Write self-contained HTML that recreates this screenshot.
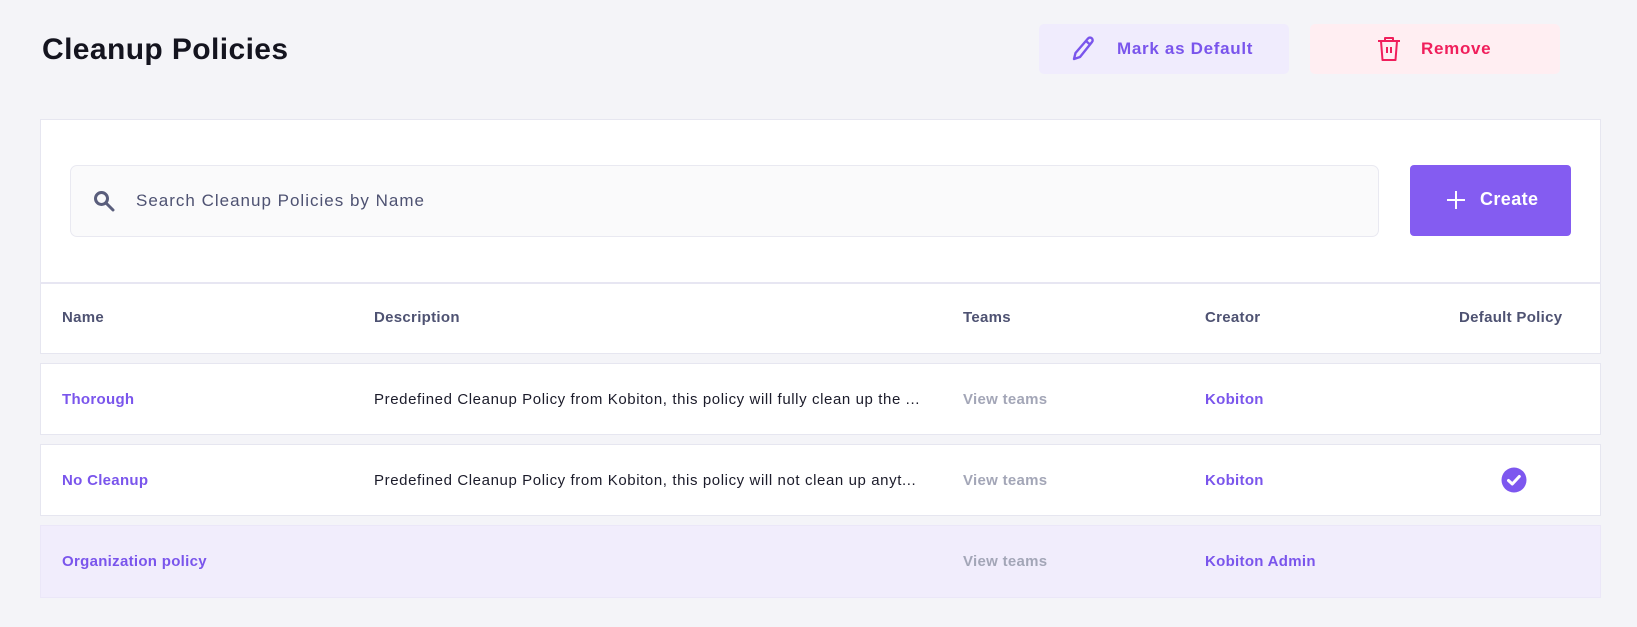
<!DOCTYPE html>
<html><head><meta charset="utf-8"><style>
*{box-sizing:border-box;margin:0;padding:0}
body{width:1637px;height:627px;background:#f4f4f8;font-family:"Liberation Sans",sans-serif;position:relative;overflow:hidden}
.abs{position:absolute}
h1{position:absolute;left:42px;top:33px;font-size:30px;font-weight:700;color:#14141f;letter-spacing:0.4px}
.btn{position:absolute;top:24px;height:50px;border-radius:5px;display:flex;align-items:center;font-weight:700;font-size:17px;letter-spacing:0.7px}
.card{position:absolute;left:40px;width:1561px;background:#fff;border:1px solid #e6e6f0}
.cell{position:absolute;font-size:15px;letter-spacing:0.3px}
.link{color:#7a55ec;font-weight:700}
.desc{color:#1b1b2a;letter-spacing:0.6px}
.muted{color:#a3a6b7;font-weight:700}
.hd{color:#4e5272;font-weight:700;font-size:15px}
</style></head><body>
<h1>Cleanup Policies</h1>
<div class="btn" style="left:1039px;width:250px;background:#f0ecfd;color:#7a55ec">
<svg class="abs" style="left:33px;top:11px" width="24" height="26" viewBox="0 0 24 26" fill="none" stroke="#7a55ec" stroke-width="2.4" stroke-linejoin="round"><path d="M2 24l1.5-6L16 3.5a2.5 2.5 0 0 1 4 3.5L8 22z M14 6l4 3.5"/></svg>
<span class="abs" style="left:78px">Mark as Default</span></div>
<div class="btn" style="left:1310px;width:250px;background:#ffeef2;color:#f01f5c">
<svg class="abs" style="left:66px;top:11px" width="26" height="28" viewBox="0 0 26 28" fill="none" stroke="#f01f5c" stroke-width="2" stroke-linejoin="round"><path d="M2 6h22M9 6V3h8v3M5 6l1.5 19h13L21 6M11 12v6M15 12v6"/></svg>
<span class="abs" style="left:111px">Remove</span></div>

<div class="card" style="top:119px;height:235px">
<div class="abs" style="left:29px;top:45px;width:1309px;height:72px;background:#fafafb;border:1px solid #e9e9f1;border-radius:7px">
<svg class="abs" style="left:22px;top:24px" width="22" height="22" viewBox="0 0 22 22" fill="none" stroke="#5a5e7c" stroke-width="3"><circle cx="8.5" cy="8.5" r="6"/><path d="M13 13l7 7" stroke-linecap="round"/></svg>
<span class="abs" style="left:65px;top:25px;font-size:17px;color:#4e5272;letter-spacing:1px">Search Cleanup Policies by Name</span></div>
<div class="abs" style="left:1369px;top:45px;width:161px;height:71px;background:#845cf1;border-radius:4px">
<svg class="abs" style="left:36px;top:25px" width="20" height="20" viewBox="0 0 20 20" stroke="#fff" stroke-width="2"><path d="M10 1v18M1 10h18"/></svg>
<span class="abs" style="left:70px;top:24px;color:#fff;font-weight:700;font-size:18px;letter-spacing:0.4px">Create</span></div>
<div class="abs" style="left:-1px;top:162px;width:1561px;border-top:2px solid #e7e6f2"></div>
<span class="cell hd" style="left:21px;top:189px">Name</span>
<span class="cell hd" style="left:333px;top:189px">Description</span>
<span class="cell hd" style="left:922px;top:189px">Teams</span>
<span class="cell hd" style="left:1164px;top:189px">Creator</span>
<span class="cell hd" style="left:1418px;top:189px">Default Policy</span>
</div>

<div class="card" style="top:363px;height:72px">
<span class="cell link" style="left:21px;top:27px">Thorough</span>
<span class="cell desc" style="left:333px;top:27px">Predefined Cleanup Policy from Kobiton, this policy will fully clean up the ...</span>
<span class="cell muted" style="left:922px;top:27px">View teams</span>
<span class="cell link" style="left:1164px;top:27px">Kobiton</span>
</div>
<div class="card" style="top:444px;height:72px">
<span class="cell link" style="left:21px;top:27px">No Cleanup</span>
<span class="cell desc" style="left:333px;top:27px">Predefined Cleanup Policy from Kobiton, this policy will not clean up anyt...</span>
<span class="cell muted" style="left:922px;top:27px">View teams</span>
<span class="cell link" style="left:1164px;top:27px">Kobiton</span>
<svg class="abs" style="left:1460px;top:22px" width="26" height="26" viewBox="0 0 26 26"><circle cx="13" cy="13" r="12.5" fill="#7d57ef"/><path d="M7.5 13.5l3.8 3.5 7-7.5" fill="none" stroke="#fff" stroke-width="3" stroke-linecap="round" stroke-linejoin="round"/></svg>
</div>
<div class="card" style="top:525px;height:73px;background:#f1edfc;border-color:#ebe7f8">
<span class="cell link" style="left:21px;top:27px">Organization policy</span>
<span class="cell muted" style="left:922px;top:27px">View teams</span>
<span class="cell link" style="left:1164px;top:27px">Kobiton Admin</span>
</div>
</body></html>
